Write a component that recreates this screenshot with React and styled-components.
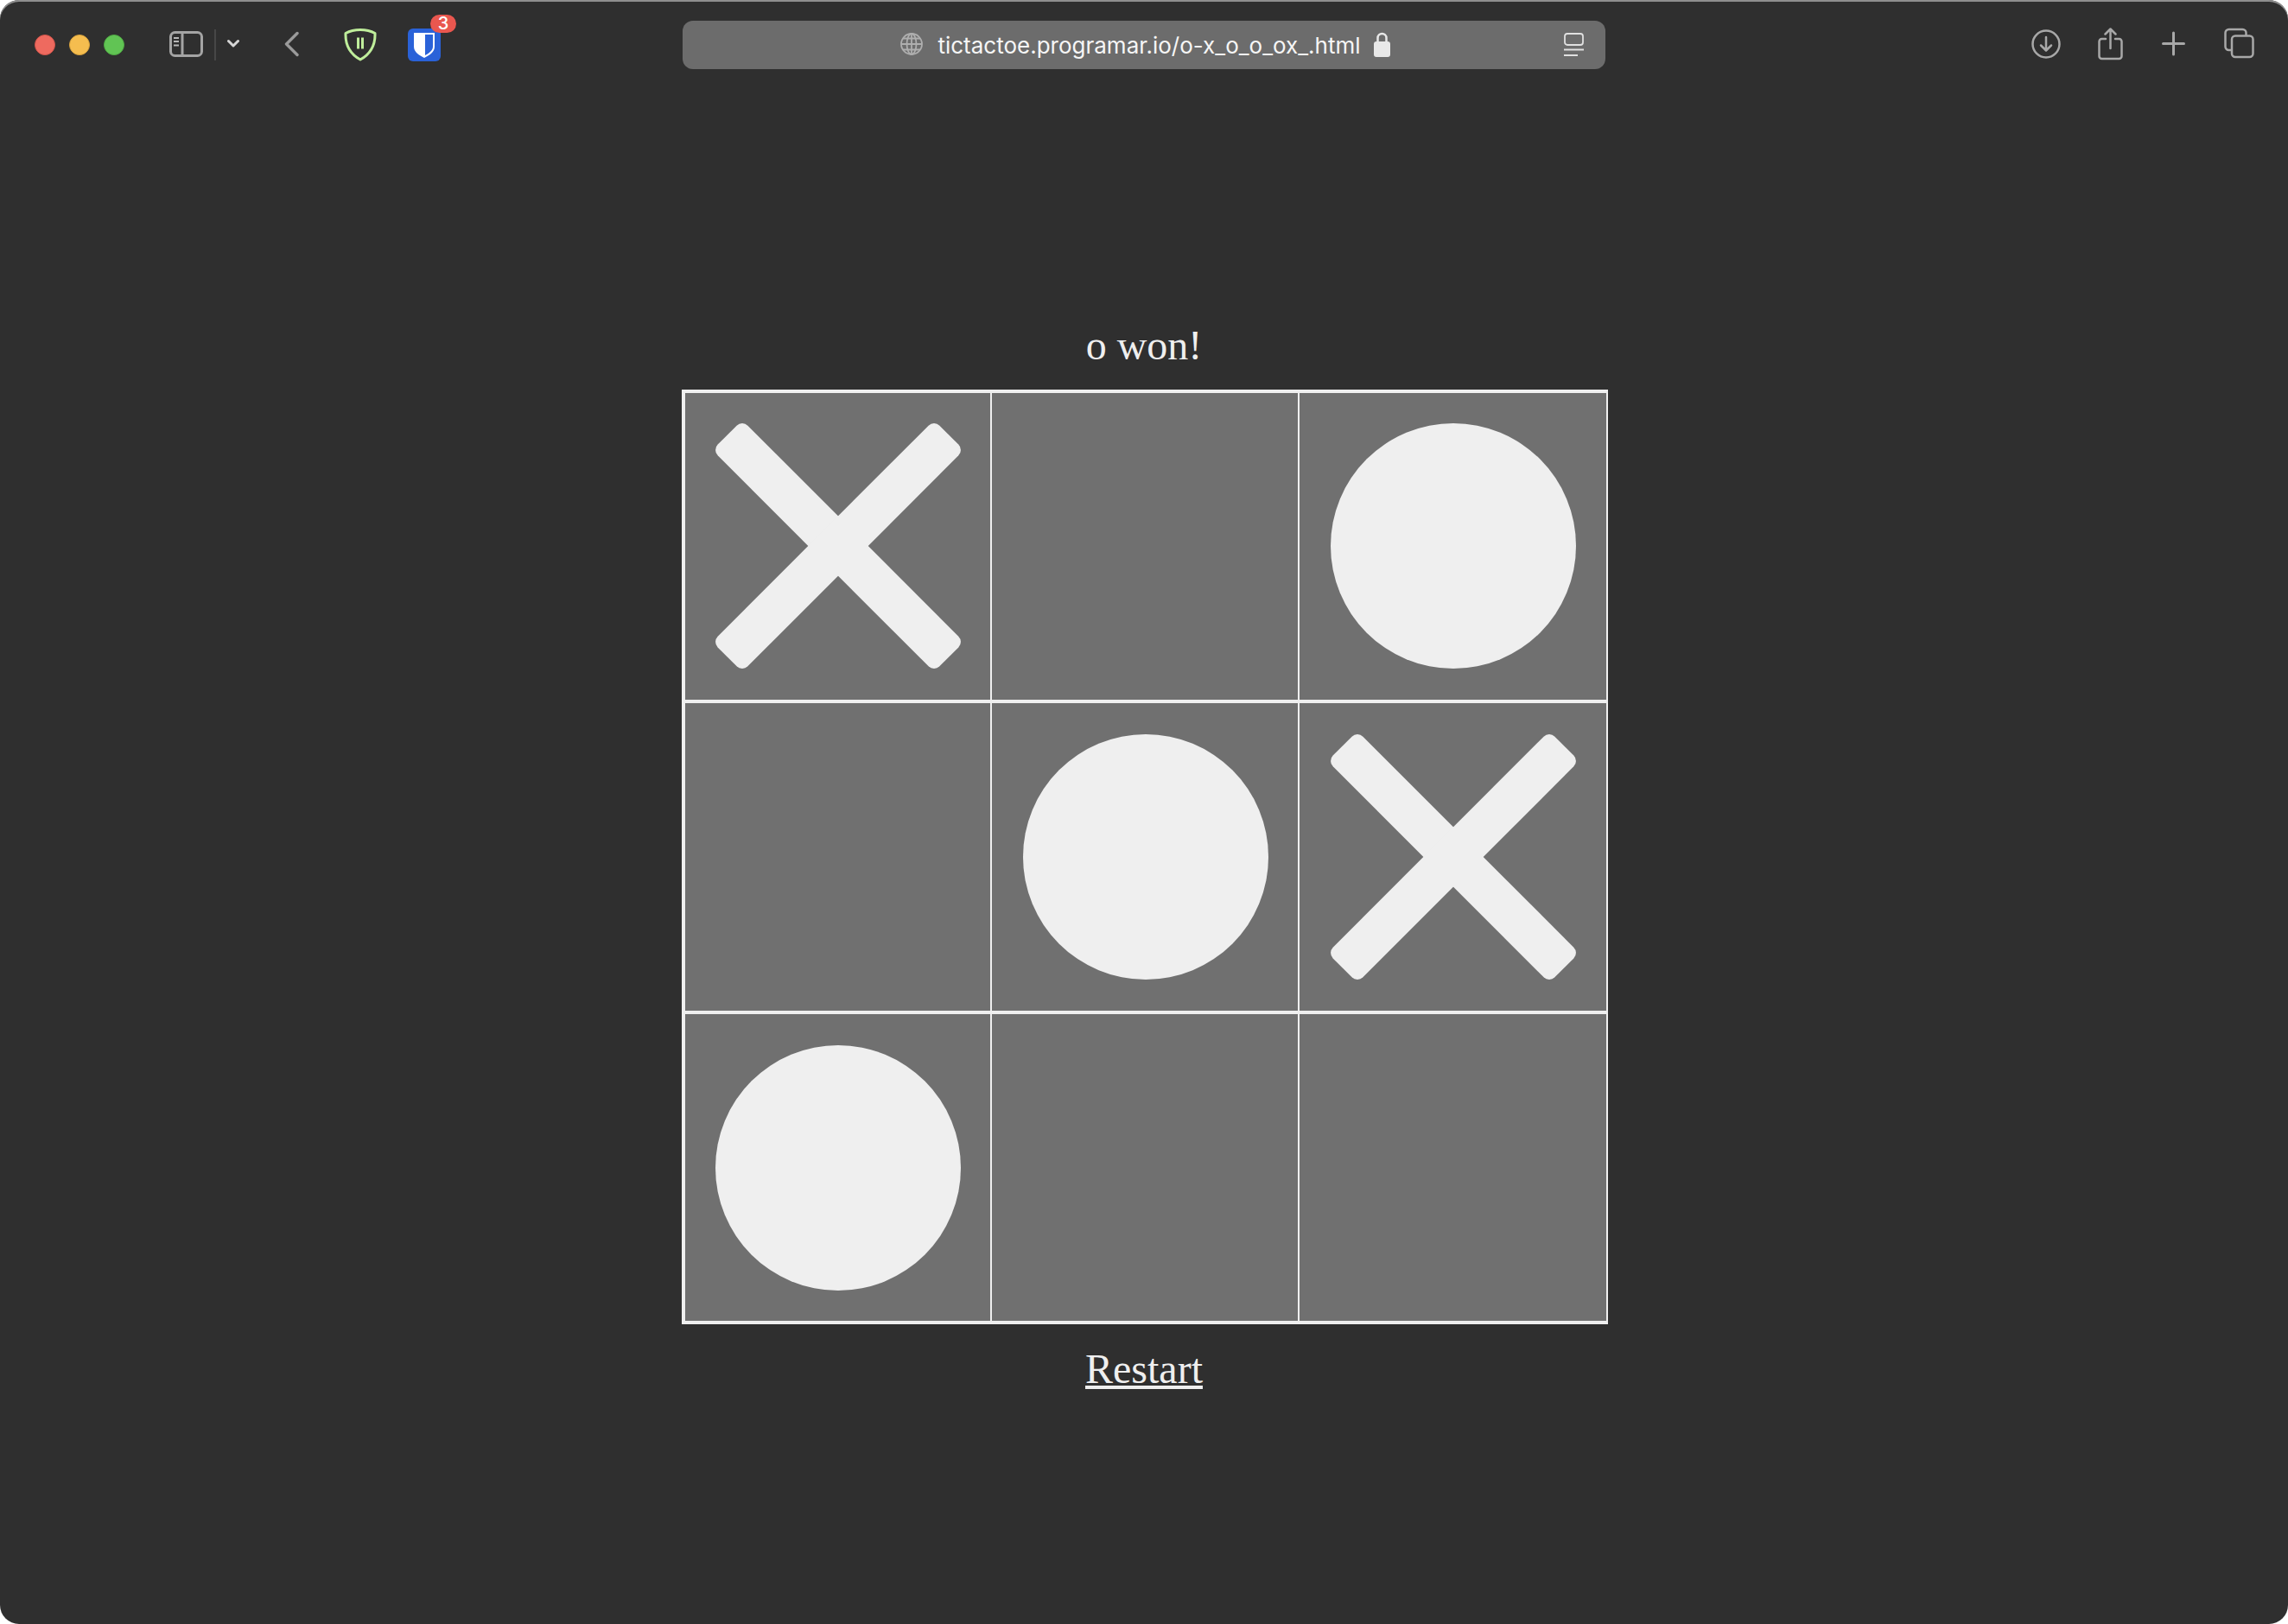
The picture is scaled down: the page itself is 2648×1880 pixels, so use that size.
import React from "react";
import styled, { createGlobalStyle } from "styled-components";

const Global = createGlobalStyle`
  html, body { margin: 0; padding: 0; background: #ffffff; }
  #root { width: 2648px; height: 1880px; }
`;

const Window = styled.div`
  width: 2648px;
  height: 1880px;
  background: #2f2f2f;
  border-radius: 22px;
  overflow: hidden;
  box-shadow: inset 0 2px 0 #8f8f8f;
  display: flex;
  flex-direction: column;
`;

const Toolbar = styled.header`
  height: 104px;
  flex: none;
  display: flex;
  align-items: center;
`;

const LeftTools = styled.div`
  width: 790px;
  flex: none;
  display: flex;
  align-items: center;
  padding-left: 40px;
  box-sizing: border-box;
`;

const RightTools = styled.div`
  flex: 1;
  display: flex;
  align-items: center;
  justify-content: flex-end;
  padding-right: 39px;
`;

const Lights = styled.div`
  display: flex;
  gap: 16px;
`;

const Light = styled.span`
  width: 24px;
  height: 24px;
  border-radius: 50%;
  box-sizing: border-box;
  background: ${(p) => p.$color};
  border: 1px solid ${(p) => p.$edge};
`;

const Icon = styled.svg`
  display: block;
  flex: none;
  height: 40px;
  width: ${(p) => p.$w}px;
  margin-left: ${(p) => p.$ml || 0}px;
`;

const Divider = styled.span`
  width: 2px;
  height: 36px;
  margin-left: 13px;
  background: #474747;
`;

const Extension = styled.div`
  position: relative;
  flex: none;
  width: 38px;
  height: 40px;
  margin-left: ${(p) => p.$ml}px;
`;

const Badge = styled.span`
  position: absolute;
  left: 26px;
  top: -15px;
  width: 30px;
  height: 21px;
  border-radius: 11px;
  background: #e9574f;
  color: #ffffff;
  font: 500 20px/21px "Inter", sans-serif;
  text-align: center;
`;

const AddressBar = styled.div`
  width: 1068px;
  height: 56px;
  flex: none;
  box-sizing: border-box;
  padding: 0 25px;
  border-radius: 12px;
  background: #6c6c6c;
  display: grid;
  grid-template-columns: 1fr auto 1fr;
  align-items: center;
`;

const AddressCenter = styled.div`
  grid-column: 2;
  display: flex;
  align-items: center;
  margin-left: 3px;
`;

const Url = styled.span`
  font: 400 26px/32px "Inter", sans-serif;
  color: #f6f6f6;
  margin-left: 17px;
  margin-right: 15px;
  padding-top: 2px;
  white-space: nowrap;
`;

const AddressEnd = styled.div`
  grid-column: 3;
  justify-self: end;
`;

const Main = styled.main`
  display: flex;
  flex-direction: column;
  align-items: center;
  padding-top: 268px;
  font-family: "Liberation Serif", "Times New Roman", serif;
  font-size: 48px;
  color: #efefef;
`;

const Status = styled.div`
  margin-bottom: 24px;
`;

const Board = styled.div`
  display: grid;
  grid-template-columns: 353px 354px 355px;
  grid-template-rows: 355px 356px 355px;
  column-gap: 2px;
  row-gap: 4px;
  padding: 4px 2px 4px 4px;
  margin-left: 2px;
  background: #efefef;
`;

const Cell = styled.div`
  background: #707070;
  padding-top: ${(p) => p.$top}px;
  padding-left: ${(p) => p.$left}px;
`;

const RestartLink = styled.a`
  margin-top: 24px;
  color: #efefef;
  text-decoration: underline;
`;

const MarkSvg = styled.svg`
  display: block;
  width: 284px;
  height: 284px;
  fill: #efefef;
`;

const Cross = () => (
  <MarkSvg viewBox="-142 -142 284 284">
    <rect x="-181.5" y="-24.5" width="363" height="49" rx="9" transform="rotate(45)" />
    <rect x="-181.5" y="-24.5" width="363" height="49" rx="9" transform="rotate(-45)" />
  </MarkSvg>
);

const Circle = () => (
  <MarkSvg viewBox="-142 -142 284 284">
    <circle r="142" />
  </MarkSvg>
);

const board = ["x", "", "o", "", "o", "x", "o", "", ""];

export default function App() {
  return (
    <Window>
      <Global />
      <Toolbar>
        <LeftTools>
          <Lights>
            <Light $color="#ee6a5f" $edge="#d2544a" />
            <Light $color="#f5bd4f" $edge="#d8a23c" />
            <Light $color="#61c454" $edge="#4fa943" />
          </Lights>
          <Icon $w={39} $ml={52} viewBox="0 0 39 40" fill="none" stroke="#a4a4a4">
            <rect x="1.5" y="5.5" width="36" height="27" rx="5" strokeWidth="3" />
            <path d="M15 5v28" strokeWidth="3" />
            <path d="M5 12h6M5 16h6M5 20.5h6" strokeWidth="2" stroke="#b8b8b8" />
          </Icon>
          <Divider />
          <Icon $w={14} $ml={13} viewBox="0 0 14 40" fill="none" stroke="#d6d6d6">
            <path d="M1.5 15.5L7 21l5.5-5.5" strokeWidth="3" strokeLinecap="round" strokeLinejoin="round" />
          </Icon>
          <Icon $w={17} $ml={52} viewBox="0 0 17 40" fill="none" stroke="#9a9a9a">
            <path d="M15 6.5L2.5 19 15 31.5" strokeWidth="3.4" strokeLinecap="round" strokeLinejoin="round" />
          </Icon>
          <Icon $w={38} $ml={52} viewBox="0 0 38 40">
            <path
              d="M19 2.5C26 2.5 31.5 4 36 6.5C36.5 20 30.5 30.5 19 37C7.5 30.5 1.5 20 2 6.5C6.5 4 12 2.5 19 2.5Z"
              fill="none"
              stroke="#bfee9b"
              strokeWidth="3"
              strokeLinejoin="round"
            />
            <path d="M16.5 11.5v13M21.500 11.5v13" stroke="#bfee9b" strokeWidth="3" />
          </Icon>
          <Extension $ml={36}>
            <svg width="38" height="40" viewBox="0 0 38 40" style={{ display: "block" }}>
              <rect x="0" y="1" width="38" height="38" rx="6" fill="#2a62d8" />
              <path d="M7 6h24v16c0 6-6 10-12 13C13 32 7 28 7 22Z" fill="#ffffff" />
              <path d="M20 8h9v14c0 4-4 7.500-9 10Z" fill="#2a62d8" />
            </svg>
            <Badge>3</Badge>
          </Extension>
        </LeftTools>
        <AddressBar>
          <AddressCenter>
            <Icon $w={26} viewBox="0 0 26 40" fill="none" stroke="#aeaeae" strokeWidth="1.8">
              <circle cx="13" cy="19" r="12" />
              <ellipse cx="13" cy="19" rx="5.500" ry="12" />
              <path d="M13 7v24M1 19h24M3 12.500h20M3 25.500h20" />
            </Icon>
            <Url>tictactoe.programar.io/o-x_o_o_ox_.html</Url>
            <Icon $w={19} viewBox="0 0 19 40">
              <path d="M4.500 17v-5a5 5 0 0 1 10 0v5" fill="none" stroke="#e8e8e8" strokeWidth="2.500" />
              <rect x="0" y="16" width="19" height="18" rx="3" fill="#e8e8e8" />
            </Icon>
          </AddressCenter>
          <AddressEnd>
            <Icon $w={23} viewBox="0 0 23 40" fill="none" stroke="#e0e0e0">
              <rect x="1" y="7" width="21" height="13" rx="3" strokeWidth="1.800" />
              <path d="M0 25.500h23" strokeWidth="2" />
              <path d="M0 32h16" strokeWidth="2" />
            </Icon>
          </AddressEnd>
        </AddressBar>
        <RightTools>
          <Icon $w={34} viewBox="0 0 34 40" fill="none" stroke="#a8a8a8" strokeLinecap="round" strokeLinejoin="round">
            <circle cx="17" cy="19" r="15.500" strokeWidth="2.500" />
            <path d="M17 11v15M11 20.500l6 6 6-6" strokeWidth="2.500" />
          </Icon>
          <Icon $w={29} $ml={43} viewBox="0 0 29 40" fill="none" stroke="#a8a8a8" strokeLinecap="round" strokeLinejoin="round">
            <path d="M9 13H4.500a3 3 0 0 0-3 3v17a3 3 0 0 0 3 3h20a3 3 0 0 0 3-3V16a3 3 0 0 0-3-3H20" strokeWidth="2.500" />
            <path d="M14.500 24V2M8.500 7.500l6-6 6 6" strokeWidth="2.500" />
          </Icon>
          <Icon $w={27} $ml={45} viewBox="0 0 27 40" fill="none" stroke="#a8a8a8" strokeLinecap="round">
            <path d="M13.500 6v25M1.500 18.500h24" strokeWidth="3" />
          </Icon>
          <Icon $w={35} $ml={45} viewBox="0 0 35 40" fill="none" stroke="#a8a8a8">
            <path d="M8.500 26H5.500a4 4 0 0 1-4-4V6a4 4 0 0 1 4-4h16a4 4 0 0 1 4 4v3" strokeWidth="2.500" />
            <rect x="9" y="9.500" width="24.500" height="24.500" rx="4" strokeWidth="2.500" />
          </Icon>
        </RightTools>
      </Toolbar>
      <Main>
        <Status>o won!</Status>
        <Board>
          {board.map((mark, i) => (
            <Cell key={i} $top={i < 3 ? 35 : 36} $left={i % 3 === 0 ? 35 : 36}>
              {mark === "x" && <Cross />}
              {mark === "o" && <Circle />}
            </Cell>
          ))}
        </Board>
        <RestartLink href="#">Restart</RestartLink>
      </Main>
    </Window>
  );
}
